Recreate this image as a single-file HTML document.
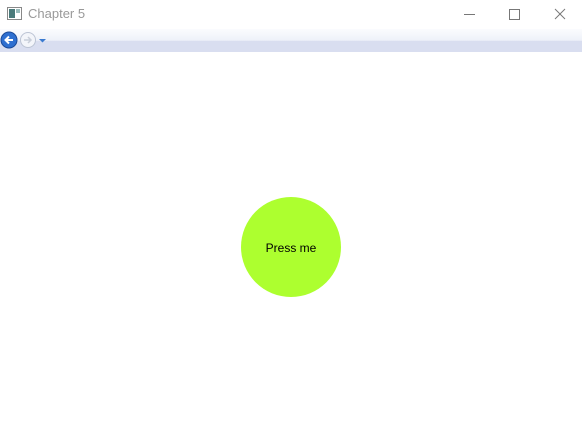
<!DOCTYPE html>
<html><head><style>
body{margin:0;width:582px;height:439px;background:#fff;position:relative;overflow:hidden;font-family:"Liberation Sans","Noto Sans CJK KR",sans-serif}
.title{position:absolute;left:28px;top:6px;font-size:13px;color:#999}
.nav{position:absolute;left:0;top:29px;width:582px;height:23px;background:linear-gradient(#fbfcfe 0%,#eef1f9 50%,#d9def0 52%,#d9def0 100%)}
.circle{position:absolute;left:241px;top:197px;width:100px;height:100px;border-radius:50%;background:#adff2f;display:flex;align-items:center;justify-content:center;font-size:12px;color:#000;padding-top:1px;box-sizing:border-box}
</style></head><body>
<svg style="position:absolute;left:7px;top:7px" width="15" height="13"><rect x="0.5" y="0.5" width="14" height="12" fill="#fff" stroke="#888"/><rect x="2" y="2" width="6" height="9" fill="#4a7a7a"/><rect x="9" y="2" width="4" height="4" fill="#9bb"/></svg>
<div class="title">Chapter 5</div>
<svg style="position:absolute;left:440px;top:0" width="142" height="29">
<line x1="24" y1="14.5" x2="35" y2="14.5" stroke="#777"/>
<rect x="69.5" y="9.5" width="10" height="10" fill="none" stroke="#777"/>
<line x1="115" y1="9" x2="125" y2="19" stroke="#777"/><line x1="125" y1="9" x2="115" y2="19" stroke="#777"/>
</svg>
<div class="nav"></div>
<svg style="position:absolute;left:0;top:31px" width="50" height="20">
<circle cx="9" cy="9" r="8" fill="#2e6fd0" stroke="#1a4a99"/>
<path d="M13 9H6M9 5.5L5.5 9L9 12.5" stroke="#fff" stroke-width="2" fill="none"/>
<circle cx="28" cy="9" r="7.5" fill="#f3f5fa" stroke="#bcc4d4"/>
<path d="M24 9H31M28 6L31 9L28 12" stroke="#c8ced9" stroke-width="1.5" fill="none"/>
<path d="M39 8H46L42.5 11.5Z" fill="#3a7ad0"/>
</svg>
<div class="circle">Press me</div>
</body></html>
